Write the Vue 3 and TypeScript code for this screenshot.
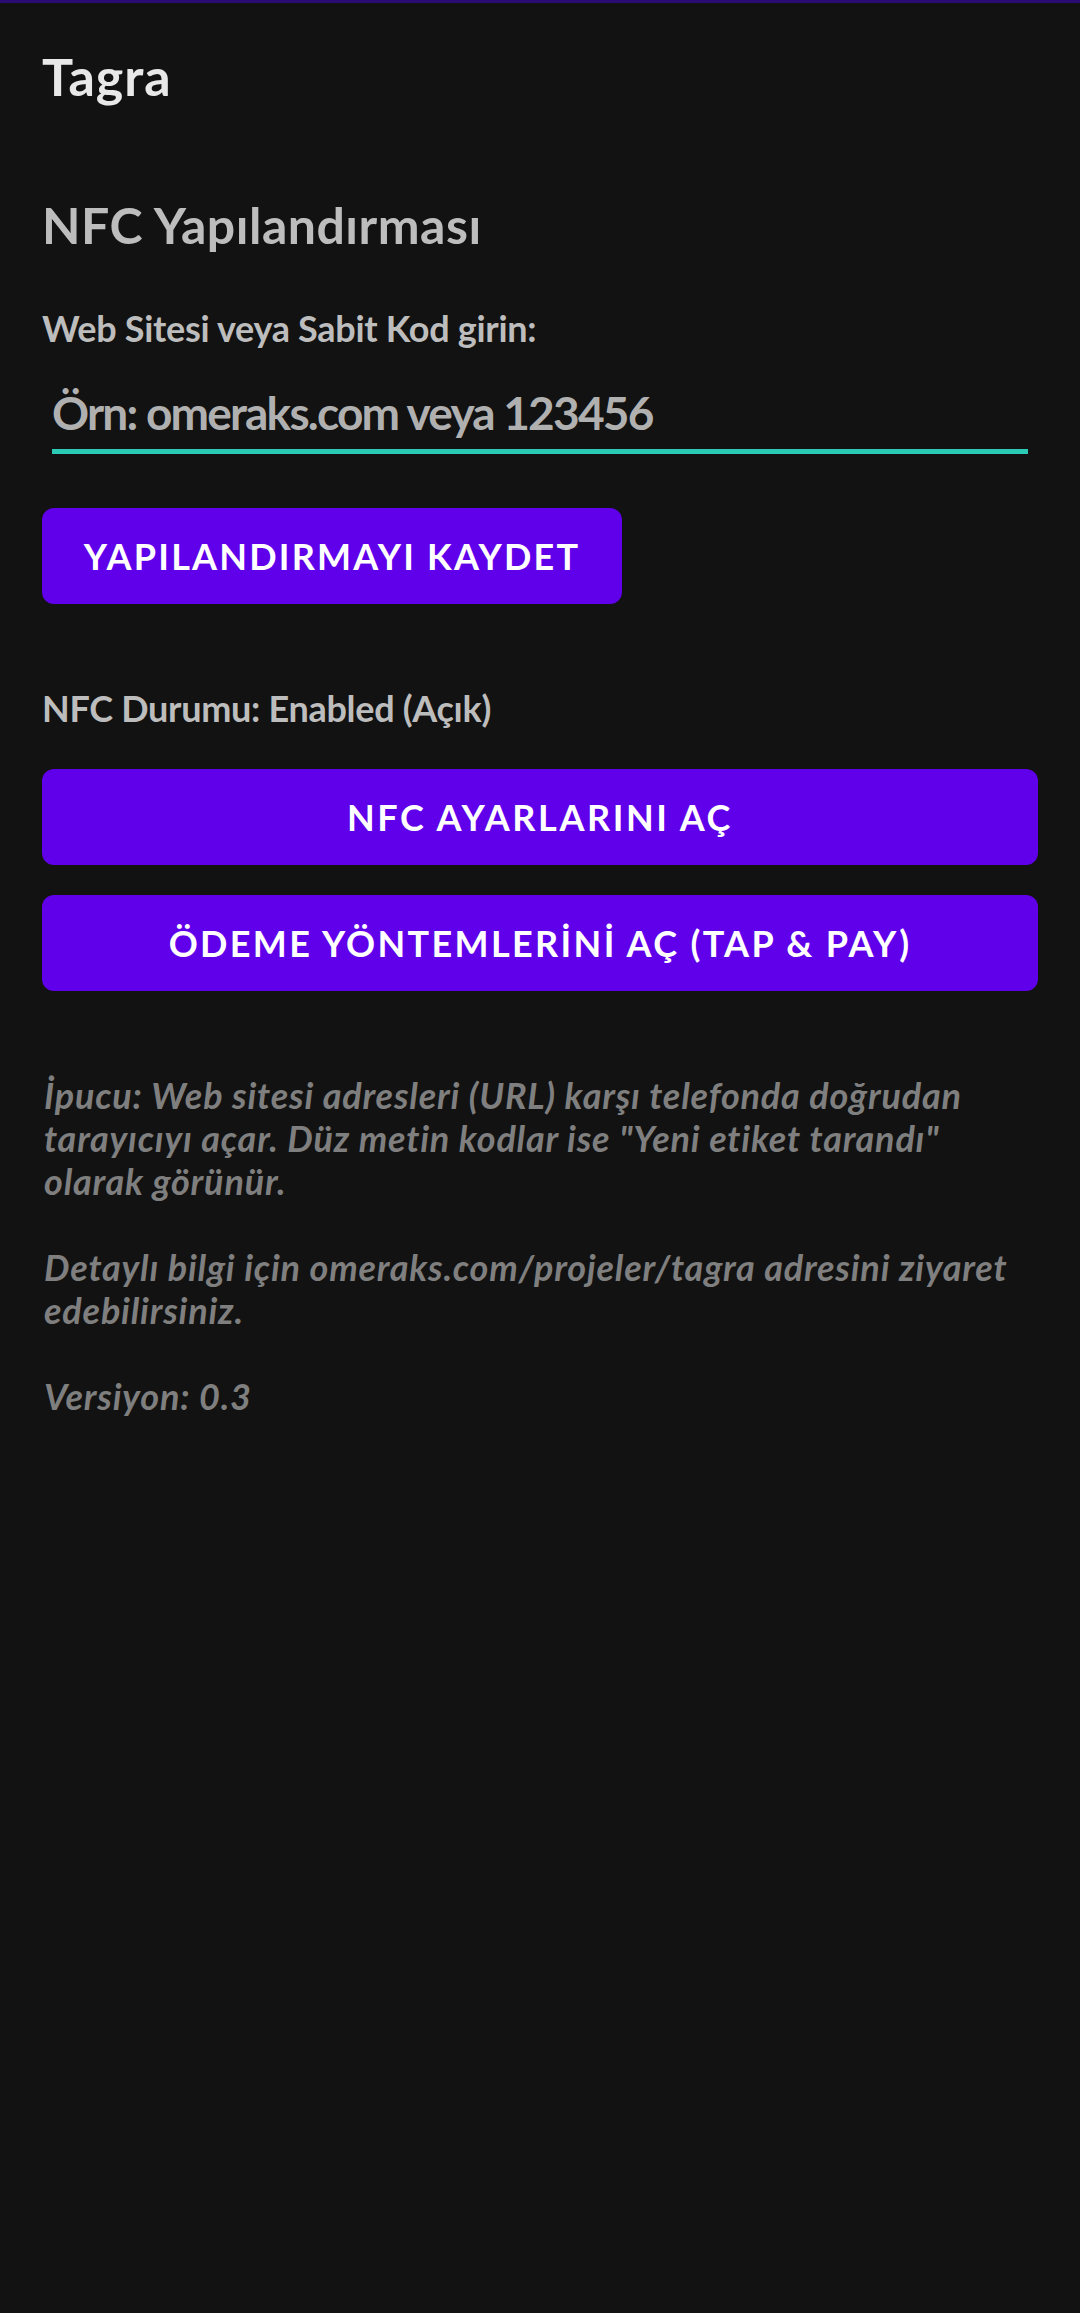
<script setup lang="ts">
const hints: string[][] = [
  ['İpucu: Web sitesi adresleri (URL) karşı telefonda doğrudan', 'tarayıcıyı açar. Düz metin kodlar ise "Yeni etiket tarandı"', 'olarak görünür.'],
  ['Detaylı bilgi için omeraks.com/projeler/tagra adresini ziyaret', 'edebilirsiniz.'],
  ['Versiyon: 0.3'],
]
</script>

<template>
  <div class="screen">
    <div class="status-line"></div>
    <header class="appbar">Tagra</header>
    <main class="content">
      <h1 class="heading">NFC Yapılandırması</h1>
      <label class="label" for="code">Web Sitesi veya Sabit Kod girin:</label>
      <input id="code" class="field" type="text" placeholder="Örn: omeraks.com veya 123456" />
      <button class="btn btn-save" type="button">YAPILANDIRMAYI KAYDET</button>
      <p class="status">NFC Durumu: Enabled (Açık)</p>
      <button class="btn btn-wide btn-nfc" type="button">NFC AYARLARINI AÇ</button>
      <button class="btn btn-wide btn-pay" type="button">ÖDEME YÖNTEMLERİNİ AÇ (TAP &amp; PAY)</button>
      <div class="hint">
        <p v-for="(block, i) in hints" :key="i" class="hint-block">
          <span v-for="line in block" :key="line" class="hint-line">{{ line }}</span>
        </p>
      </div>
    </main>
  </div>
</template>

<style>
html, body { margin: 0; background: #121212; }
</style>

<style scoped>
.screen {
  width: 1080px;
  height: 2313px;
  background: #121212;
  font-family: "Lato", "Noto Sans", sans-serif;
  overflow: hidden;
}
.status-line { height: 3px; background: #2a0b73; }
.appbar {
  margin: 41px 0 0 42px;
  height: 64px;
  line-height: 64px;
  font-size: 52px;
  font-weight: 700;
  letter-spacing: 1px;
  color: #e8e8e8;
}
.content { padding: 0 42px; display: flex; flex-direction: column; align-items: flex-start; }
.heading {
  margin: 85px 0 0;
  height: 64px;
  line-height: 64px;
  font-size: 50px;
  font-weight: 700;
  letter-spacing: 0.5px;
  color: #bdbdbd;
}
.label {
  margin-top: 49px;
  height: 44px;
  line-height: 44px;
  font-size: 36px;
  font-weight: 700;
  letter-spacing: -0.3px;
  color: #bdbdbd;
}
.field {
  box-sizing: border-box;
  align-self: stretch;
  margin: 26px 10px 0;
  padding: 0;
  height: 78px;
  background: transparent;
  border: 0;
  border-bottom: 5px solid #2bcab4;
  outline: 0;
  font-family: inherit;
  font-size: 46px;
  font-weight: 700;
  letter-spacing: -1.8px;
  color: #b5b5b5;
}
.field::placeholder { color: #b0b0b0; opacity: 1; }
.btn {
  display: block;
  height: 96px;
  padding: 0;
  border: 0;
  border-radius: 12px;
  background: #6000ea;
  color: #fff;
  font-family: inherit;
  font-size: 36px;
  font-weight: 700;
  text-align: center;
}
.btn-save { width: 580px; margin-top: 54px; letter-spacing: 2.2px; }
.btn-wide { align-self: stretch; }
.status {
  margin: 82px 0 0;
  height: 44px;
  line-height: 44px;
  font-size: 36px;
  font-weight: 700;
  letter-spacing: -0.3px;
  color: #bdbdbd;
}
.btn-nfc { margin-top: 39px; letter-spacing: 2.6px; }
.btn-pay { margin-top: 30px; letter-spacing: 2.35px; }
.hint {
  margin: 83px 0 0 2px;
  font-size: 36px;
  font-style: italic;
  font-weight: 700;
  line-height: 43px;
  letter-spacing: 0.8px;
  color: #7f7f7f;
}
.hint-block { margin: 0 0 43px; }
.hint-line { display: block; white-space: nowrap; }
</style>
